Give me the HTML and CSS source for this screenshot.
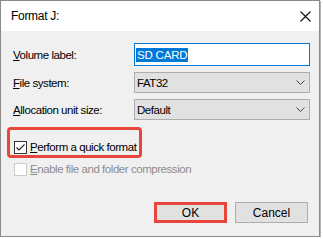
FILE: index.html
```html
<!DOCTYPE html>
<html>
<head>
<meta charset="utf-8">
<link rel="stylesheet" href="styles.css">
</head>
<body>
<div class="window">
  <div class="titlebar">
    <span class="title">Format J:</span>
    <svg class="close" width="11" height="11" viewBox="0 0 11 11"><path d="M0.5 0.5L10.5 10.5M10.5 0.5L0.5 10.5" stroke="#111" stroke-width="1.1" fill="none"/></svg>
  </div>
  <div class="content">
    <div class="form">
      <div class="lbl"><u>V</u>olume label:</div>
      <div class="field textbox"><span class="selected">SD CARD</span></div>
      <div class="lbl"><u>F</u>ile system:</div>
      <div class="field combo"><span>FAT32</span><svg class="chev" width="9" height="5" viewBox="0 0 9 5"><path d="M0.5 0.5L4.5 4.5L8.5 0.5" stroke="#444" stroke-width="1" fill="none"/></svg></div>
      <div class="lbl"><u>A</u>llocation unit size:</div>
      <div class="field combo"><span>Default</span><svg class="chev" width="9" height="5" viewBox="0 0 9 5"><path d="M0.5 0.5L4.5 4.5L8.5 0.5" stroke="#444" stroke-width="1" fill="none"/></svg></div>
    </div>
    <div class="checks">
      <div class="check">
        <span class="box"><svg width="11" height="11" viewBox="0 0 11 11"><path d="M1.5 5.5L4 8L9.5 2.5" stroke="#222" stroke-width="1.1" fill="none"/></svg></span>
        <span><u>P</u>erform a quick format</span>
      </div>
      <div class="check disabled">
        <span class="box"></span>
        <span><u>E</u>nable file and folder compression</span>
      </div>
      <div class="annot"></div>
    </div>
    <div class="buttons">
      <button class="btn ok">OK</button>
      <button class="btn">Cancel</button>
    </div>
  </div>
</div>
</body>
</html>
```
FILE: styles.css
```css
html, body {
  margin: 0;
  padding: 0;
  background: #ffffff;
}
body {
  font-family: "Liberation Sans", Arial, sans-serif;
  font-size: 11.5px;
  letter-spacing: -0.45px;
  color: #000;
}
.window {
  width: 320px;
  height: 237px;
  box-sizing: border-box;
  border: 1px solid #8a8a8a;
  box-shadow: 1px 1px 0 #b4b4b4;
  background: #f0f0f0;
  display: flex;
  flex-direction: column;
}
.titlebar {
  height: 30px;
  background: #ffffff;
  display: flex;
  align-items: center;
  justify-content: space-between;
  padding: 0 8px 0 10px;
}
.title {
  line-height: 16px;
  font-size: 12px;
  letter-spacing: -0.3px;
}
.close {
  display: block;
  margin-top: 1px;
}
.content {
  flex: 1;
  padding: 12px 9px 0 12px;
  position: relative;
}
.form {
  display: grid;
  grid-template-columns: 121px 176px;
  grid-template-rows: 23px 21px 21px;
  row-gap: 6px;
  align-items: center;
}
.form .lbl {
  line-height: 16px;
}
u {
  text-underline-offset: 1px;
}
.field {
  box-sizing: border-box;
  height: 100%;
  display: flex;
  align-items: center;
}
.textbox {
  background: #fff;
  border: 1px solid #0078d7;
  padding-left: 1px;
}
.selected {
  background: #0078d7;
  color: #fff;
  line-height: 14px;
  padding: 0 1px;
  letter-spacing: -0.2px;
}
.combo {
  background: #e1e1e1;
  border: 1px solid #adadad;
  padding: 0 4px 0 2px;
  justify-content: space-between;
}
.chev {
  display: block;
}
.checks {
  margin-top: 17px;
  display: flex;
  flex-direction: column;
  gap: 2px;
  position: relative;
}
.check {
  height: 20px;
  display: flex;
  align-items: center;
  gap: 3px;
  margin-left: 1px;
}
.box {
  width: 13px;
  height: 13px;
  box-sizing: border-box;
  border: 1px solid #333;
  background: #fff;
  display: flex;
  align-items: center;
  justify-content: center;
}
.disabled {
  color: #8d8d8d;
}
.disabled .box {
  border-color: #cccccc;
}
.annot {
  position: absolute;
  left: -6px;
  top: -10px;
  width: 135px;
  height: 31px;
  box-sizing: border-box;
  border: 3px solid #e8453c;
  border-radius: 4px;
}
.buttons {
  margin-top: 23px;
  display: flex;
  justify-content: flex-end;
  gap: 8px;
  padding-right: 2px;
}
.btn {
  width: 73px;
  height: 21px;
  box-sizing: border-box;
  border: 1px solid #adadad;
  background: #e1e1e1;
  font-family: inherit;
  font-size: 12px;
  letter-spacing: 0;
  color: #000;
  padding: 0;
  margin: 0;
  line-height: 16px;
}
.btn.ok {
  border: 3px solid #e8453c;
}
```
